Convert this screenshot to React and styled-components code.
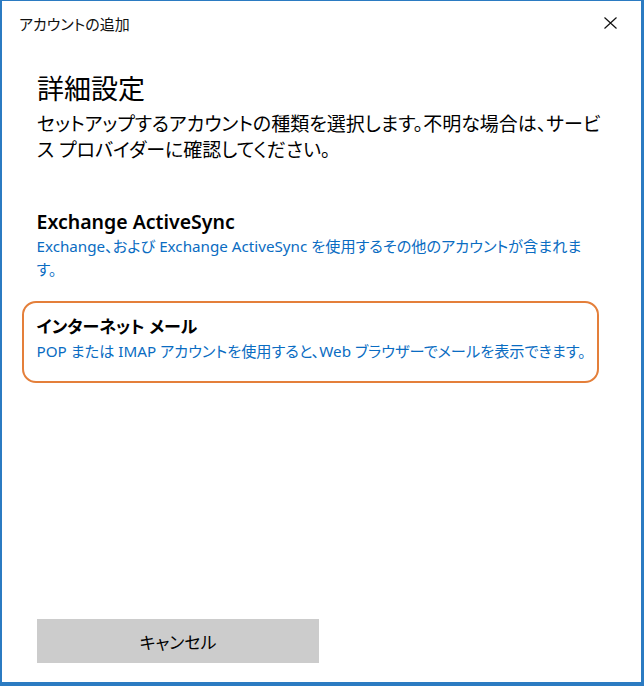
import React from "react";
import styled, { createGlobalStyle } from "styled-components";

const Global = createGlobalStyle`
  html, body { margin: 0; padding: 0; background: #ffffff; }
  body { font-family: "Noto Sans", "Noto Sans CJK JP", sans-serif; }
  * { box-sizing: border-box; }
`;

const Window = styled.div`
  width: 644px;
  height: 686px;
  display: flex;
  flex-direction: column;
  background: #ffffff;
  border-style: solid;
  border-color: #2b7bc2;
  border-width: 1px 3px 4px 2px;
  font-family: "Noto Sans", "Noto Sans CJK JP", sans-serif;
  font-feature-settings: "palt";
  color: #000000;
`;

const TitleBar = styled.div`
  height: 44px;
  display: flex;
  align-items: center;
  justify-content: space-between;
  padding: 0 19px 0 17px;
`;

const TitleText = styled.span`
  font-size: 15px;
  color: #111111;
`;

const CloseButton = styled.button`
  width: 24px;
  height: 24px;
  padding: 0;
  border: none;
  background: transparent;
  display: flex;
  align-items: center;
  justify-content: center;
  cursor: pointer;
`;

const Content = styled.div`
  flex: 1;
  display: flex;
  flex-direction: column;
  padding: 0 0 19px 20px;
`;

const Heading = styled.h1`
  margin: 27px 0 0 15px;
  font-size: 27px;
  line-height: 34px;
  font-weight: 400;
`;

const Description = styled.p`
  margin: 5px 0 0 15px;
  font-size: 19px;
  line-height: 26px;
  font-weight: 400;
  white-space: nowrap;
`;

const OptionList = styled.div`
  display: flex;
  flex-direction: column;
  margin-top: 33px;
  width: 577px;
`;

const Option = styled.div`
  border: 2.5px solid ${(p) => (p.$selected ? "#e47f3a" : "transparent")};
  border-radius: 14px;
  padding: 11px 10px 18px 12.5px;
  cursor: pointer;
`;

const OptionTitle = styled.div`
  font-size: ${(p) => p.$size || 19.5}px;
  line-height: 26px;
  font-weight: 600;
  color: #000000;
`;

const OptionDesc = styled.div`
  font-size: 15.2px;
  line-height: 23px;
  color: #0a6cc2;
  white-space: nowrap;
`;

const Footer = styled.div`
  margin-top: auto;
  padding-left: 15px;
`;

const CancelButton = styled.button`
  width: 282px;
  height: 44px;
  border: none;
  background: #cccccc;
  font-family: inherit;
  font-feature-settings: "palt";
  font-size: 17px;
  color: #000000;
  cursor: pointer;
`;

export default function App() {
  return (
    <>
      <Global />
      <Window>
        <TitleBar>
          <TitleText>アカウントの追加</TitleText>
          <CloseButton aria-label="閉じる">
            <svg width="13" height="12" viewBox="0 0 13 12">
              <path d="M0.5 0.5 L12.5 11.5 M12.5 0.5 L0.5 11.5" stroke="#111" strokeWidth="1.2" fill="none" />
            </svg>
          </CloseButton>
        </TitleBar>
        <Content>
          <Heading>詳細設定</Heading>
          <Description>
            セットアップするアカウントの種類を選択します。不明な場合は、サービ
            <br />
            ス プロバイダーに確認してください。
          </Description>
          <OptionList>
            <Option>
              <OptionTitle>Exchange ActiveSync</OptionTitle>
              <OptionDesc>
                Exchange、および Exchange ActiveSync を使用するその他のアカウントが含まれま
                <br />
                す。
              </OptionDesc>
            </Option>
            <Option $selected>
              <OptionTitle $size={17}>インターネット メール</OptionTitle>
              <OptionDesc>
                POP または IMAP アカウントを使用すると、Web ブラウザーでメールを表示できます。
              </OptionDesc>
            </Option>
          </OptionList>
          <Footer>
            <CancelButton>キャンセル</CancelButton>
          </Footer>
        </Content>
      </Window>
    </>
  );
}
